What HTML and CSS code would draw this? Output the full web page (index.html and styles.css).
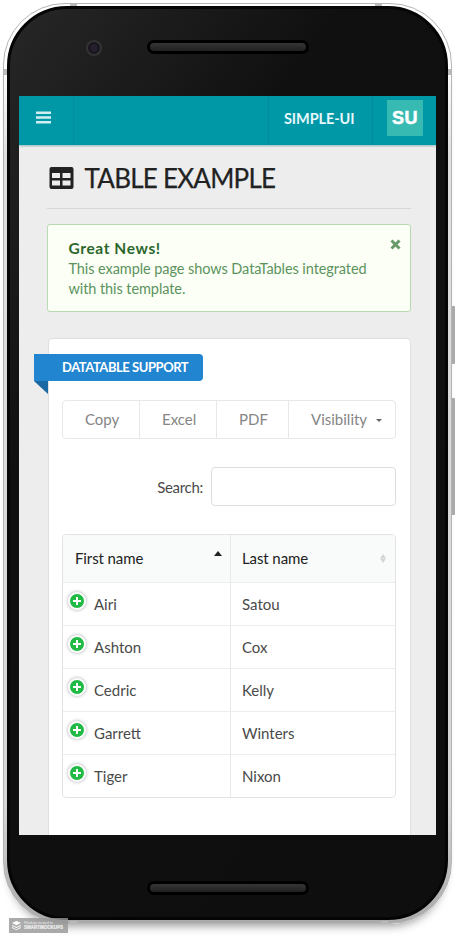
FILE: index.html
```html
<!DOCTYPE html>
<html lang="en">
<head>
<meta charset="utf-8">
<title>Simple-UI – Table Example</title>
<link rel="stylesheet" href="styles.css">
</head>
<body>
<div class="phone">
  <i class="antenna a-top-left"></i><i class="antenna a-top-right"></i>
  <i class="antenna a-left"></i><i class="antenna a-right"></i>
  <i class="antenna a-bottom-left"></i><i class="antenna a-bottom-right"></i>
  <i class="side-key power"></i><i class="side-key volume"></i>
  <div class="bezel">
    <div class="forehead"><span class="camera"></span><span class="speaker"></span></div>
    <div class="screen">
      <nav class="navbar">
        <div class="menu"><svg width="15" height="13" viewBox="0 0 15 13"><path d="M0 1.8h15M0 6.5h15M0 11.2h15" stroke="#d0eff2" stroke-width="2.6"/></svg></div>
        <div class="brand"><span>SIMPLE-UI</span></div>
        <div class="user"><span class="avatar"><span>SU</span></span></div>
      </nav>
      <main>
        <h1>
          <svg width="25" height="22" viewBox="0 0 25 22"><path fill="#222" fill-rule="evenodd" d="M2.500 0h20A2 2 0 0 1 24.500 2v18a2 2 0 0 1-2 2h-20A2 2 0 0 1 .5 20V2A2 2 0 0 1 2.500 0zM3 6v5h8V6zM13.500 6v5h8V6zM3 13.500v5h8v-5zM13.500 13.500v5h8v-5z"/></svg>
          <span>TABLE EXAMPLE</span>
        </h1>
        <section class="alert">
          <div class="alert-text"><strong>Great News!</strong><p><span class="line-one">This example page shows DataTables integrated</span> <span class="line-two">with this template.</span></p></div>
          <svg class="close" width="11" height="11" viewBox="0 0 11 11"><path d="M1.500 1.500l8 8M9.500 1.500l-8 8" stroke="#669a68" stroke-width="3"/></svg>
        </section>
        <section class="card">
          <h2 class="ribbon"><span>DATATABLE SUPPORT</span></h2>
          <div class="buttons">
            <span class="b-copy">Copy</span><span class="b-excel">Excel</span><span class="b-pdf">PDF</span>
            <span class="b-vis"><span>Visibility</span><i class="caret"></i></span>
          </div>
          <label class="search"><span>Search:</span><input type="text"></label>
          <div class="table">
            <div class="row head">
              <div><span class="first">First name</span><i class="sort-up"></i></div>
              <div><span class="last">Last name</span><svg width="6" height="9" viewBox="0 0 6 9"><path d="M3 0l3 4.200H0zM0 4.800h6L3 9z" fill="#d3d5d5"/></svg></div>
            </div>
            <div class="row"><div><i class="plus"></i><span>Airi</span></div><div>Satou</div></div>
            <div class="row"><div><i class="plus"></i><span>Ashton</span></div><div>Cox</div></div>
            <div class="row"><div><i class="plus"></i><span>Cedric</span></div><div>Kelly</div></div>
            <div class="row"><div><i class="plus"></i><span>Garrett</span></div><div>Winters</div></div>
            <div class="row"><div><i class="plus"></i><span>Tiger</span></div><div>Nixon</div></div>
          </div>
        </section>
      </main>
    </div>
    <div class="chin"><span class="speaker"></span></div>
  </div>
</div>
<div class="watermark">
  <svg width="9" height="9" viewBox="0 0 9 9"><path d="M4.500 0L9 2.100 4.500 4.200 0 2.100zM0 4l4.500 2.100L9 4v.9L4.500 7 0 4.900zM0 6.100l4.500 2.100L9 6.100V7L4.500 9 0 7z" fill="#fff"/></svg>
  <span><small>Mockup created in</small><b>SMARTMOCKUPS</b></span>
</div>
</body>
</html>
```
FILE: styles.css
```css
* { box-sizing: border-box; }
body {
  margin: 0;
  width: 457px;
  height: 942px;
  overflow: hidden;
  background: #fff;
  font-family: Lato, "Liberation Sans", sans-serif;
  font-size: 15px;
  color: #4a4a4a;
}
h1, h2, p { margin: 0; font-weight: 400; }
i { display: block; }

/* Device */
.phone {
  position: relative;
  width: 449px;
  height: 921px;
  margin: 3px 0 0 3px;
  padding: 2px 3px 3px 3px;
  border: 1px solid #b5b5b5;
  border-radius: 62px;
  background: linear-gradient(#fff 0, #fff 60px, #dedede 150px, #d5d5d5 800px, #aaa 100%);
  box-shadow: 0 9px 10px -7px rgba(0, 0, 0, .4);
}
.bezel {
  position: relative;
  height: 914px;
  padding: 0 9px;
  border: 3px solid #050505;
  border-radius: 60px;
  background: linear-gradient(125deg, #272727 0, #101010 270px, #0e0e0e 100%);
}
.forehead { display: flex; height: 87px; padding: 31px 0 0 67px; }
.camera {
  width: 16px;
  height: 16px;
  margin-right: 45px;
  border: 2px solid #343335;
  border-radius: 50%;
  background: radial-gradient(#261f30 0 25%, #151319 70%);
}
.speaker {
  width: 162px;
  height: 14px;
  border: 3px solid #000;
  border-radius: 7px;
  background: linear-gradient(#363636, #202020);
}
.chin { display: flex; justify-content: center; padding-top: 46px; }
.antenna { position: absolute; background: #b9b9b9; }
.a-top-left, .a-top-right, .a-bottom-left, .a-bottom-right { width: 7px; height: 2px; }
.a-top-left { left: 66px; top: 0; }
.a-top-right { right: 69px; top: 0; }
.a-bottom-left { left: 66px; bottom: 0; }
.a-bottom-right { right: 63px; bottom: 0; }
.a-left, .a-right { width: 3px; height: 6px; top: 65px; }
.a-left { left: 0; }
.a-right { right: 0; }
.side-key { position: absolute; right: -4px; width: 3px; background: #aaa; border-radius: 0 1px 1px 0; }
.power { top: 302px; height: 58px; }
.volume { top: 394px; height: 117px; }

.screen { width: 417px; height: 739px; overflow: hidden; background: #ededed; }
.navbar {
  display: flex;
  height: 49px;
  background: #0097a7;
  box-shadow: 0 1px 2px rgba(0, 100, 110, .4);
}
.menu { width: 55px; padding: 15px 0 0 17px; border-right: 1px solid #038e9e; }
.menu svg { display: block; }
.brand {
  width: 105px;
  margin-left: 194px;
  padding: 14px 0 0 15px;
  border: solid #038e9e;
  border-width: 0 1px;
  color: #e5f8fa;
  font-size: 14.500px;
  font-weight: 700;
  line-height: 17px;
  letter-spacing: -.1px;
}
.user { padding: 4px 0 0 14px; }
.avatar {
  display: flex;
  align-items: center;
  justify-content: center;
  width: 36px;
  height: 36px;
  background: #36bab2;
  color: #fff;
  font: 700 18px/20px "Liberation Sans", sans-serif;
  letter-spacing: .5px;
  -webkit-text-stroke: .5px #fff;
}

main { padding: 17px 25px 0 28px; }
h1 {
  display: flex;
  align-items: center;
  gap: 11px;
  height: 47px;
  padding: 0 0 14px 1.500px;
  border-bottom: 1px solid #d8d8d8;
  color: #222;
  font-size: 26px;
  line-height: 32px;
  white-space: nowrap;
  letter-spacing: -.75px;
  -webkit-text-stroke: .25px #222;
}
.alert {
  display: flex;
  justify-content: space-between;
  height: 88px;
  margin-top: 15px;
  padding: 14px 9px 0 20.500px;
  border: 1px solid #b9d9b3;
  border-radius: 3px;
  background: #fcfff5;
  color: #5b935e;
  white-space: nowrap;
}
.alert strong { display: block; color: #2c662d; font-size: 15.500px; line-height: 19px; letter-spacing: .6px; font-weight: 700; }
.alert p { padding-top: 1px; font-size: 14.500px; line-height: 20px; letter-spacing: -.08px; }
.alert p span { display: block; }

.card {
  height: 510px;
  margin: 26px 0 0 1px;
  padding: 15px 14px 0 14px;
  border: 1px solid #dfdfdf;
  border-radius: 4px;
  background: #fff;
}
.ribbon {
  position: relative;
  width: 169px;
  height: 27px;
  margin-left: -29px;
  padding: 5px 0 0 28px;
  border-radius: 0 4px 4px 0;
  background: #2185d0;
  color: #fff;
  font-size: 13px;
  font-weight: 700;
  line-height: 17px;
  letter-spacing: -.45px;
  white-space: nowrap;
}
.ribbon::after {
  content: "";
  position: absolute;
  top: 27px;
  left: 0;
  border-top: 13px solid #1a69a4;
  border-left: 14px solid transparent;
}
.buttons {
  display: flex;
  height: 39px;
  margin-top: 19px;
  margin-left: -1px;
  border: 1px solid #e8e8e8;
  border-radius: 4px;
  color: #858585;
  line-height: 36px;
}
.buttons > span { display: flex; padding-left: 22px; border-right: 1px solid #e8e8e8; }
.buttons > span:last-child { border: 0; }
.buttons .b-copy, .buttons .b-excel { width: 77px; }
.buttons .b-pdf { width: 72px; }
.caret { margin: 18px 0 0 9px; border: 3px solid transparent; border-top-color: #666; border-bottom: 0; height: 3px; }
.search { display: flex; justify-content: flex-end; gap: 8px; margin-top: 28px; line-height: 41px; white-space: nowrap; letter-spacing: -.3px; }
.search input {
  width: 185px;
  height: 39px;
  padding: 0 10px;
  border: 1px solid #dedede;
  border-radius: 4px;
  background: #fff;
  outline: 0;
}
.table { margin: 26px 0 0 -1px; height: 264px; border: 1px solid #e2e3e3; border-radius: 4px; overflow: hidden; }
.row { display: grid; grid-template-columns: 168px 1fr; height: 43px; border-bottom: 1px solid #ededed; }
.row:last-child { border-bottom: 0; }
.row > div { display: flex; padding-left: 11px; line-height: 42px; }
.row > div:first-child { padding-left: 7px; border-right: 1px solid #e8e8e8; }
.row.head { height: 48px; background: #f9fafa; color: #222; letter-spacing: -.1px; }
.row.head > div { align-items: center; justify-content: space-between; padding-right: 9px; line-height: 47px; }
.row.head > div:first-child { padding-left: 12px; padding-right: 8px; }
.sort-up { margin-bottom: 11px; border: 4.500px solid transparent; border-bottom: 5px solid #222; border-top: 0; }
.plus {
  width: 16px;
  height: 16px;
  margin: 10px 9px 0 -1px;
  flex: none;
  border-radius: 50%;
  background: linear-gradient(#fff, #fff) center / 8px 2px no-repeat, linear-gradient(#fff, #fff) center / 2px 8px no-repeat, #21ba45;
  border: 1px solid #fff;
  box-shadow: 0 0 0 1px #fff, 0 0 3px 2px #ccc;
}

.watermark {
  position: absolute;
  left: 9px;
  top: 918px;
  display: flex;
  align-items: center;
  gap: 3px;
  width: 59px;
  height: 15px;
  padding-left: 3px;
  background: rgba(150, 150, 150, .8);
  color: #eee;
  white-space: nowrap;
}
.watermark span { display: flex; flex-direction: column; }
.watermark small { font-size: 3.500px; line-height: 4px; }
.watermark b { font: 700 4.500px/5px "Liberation Sans", sans-serif; -webkit-text-stroke: .2px #eee; }
```
